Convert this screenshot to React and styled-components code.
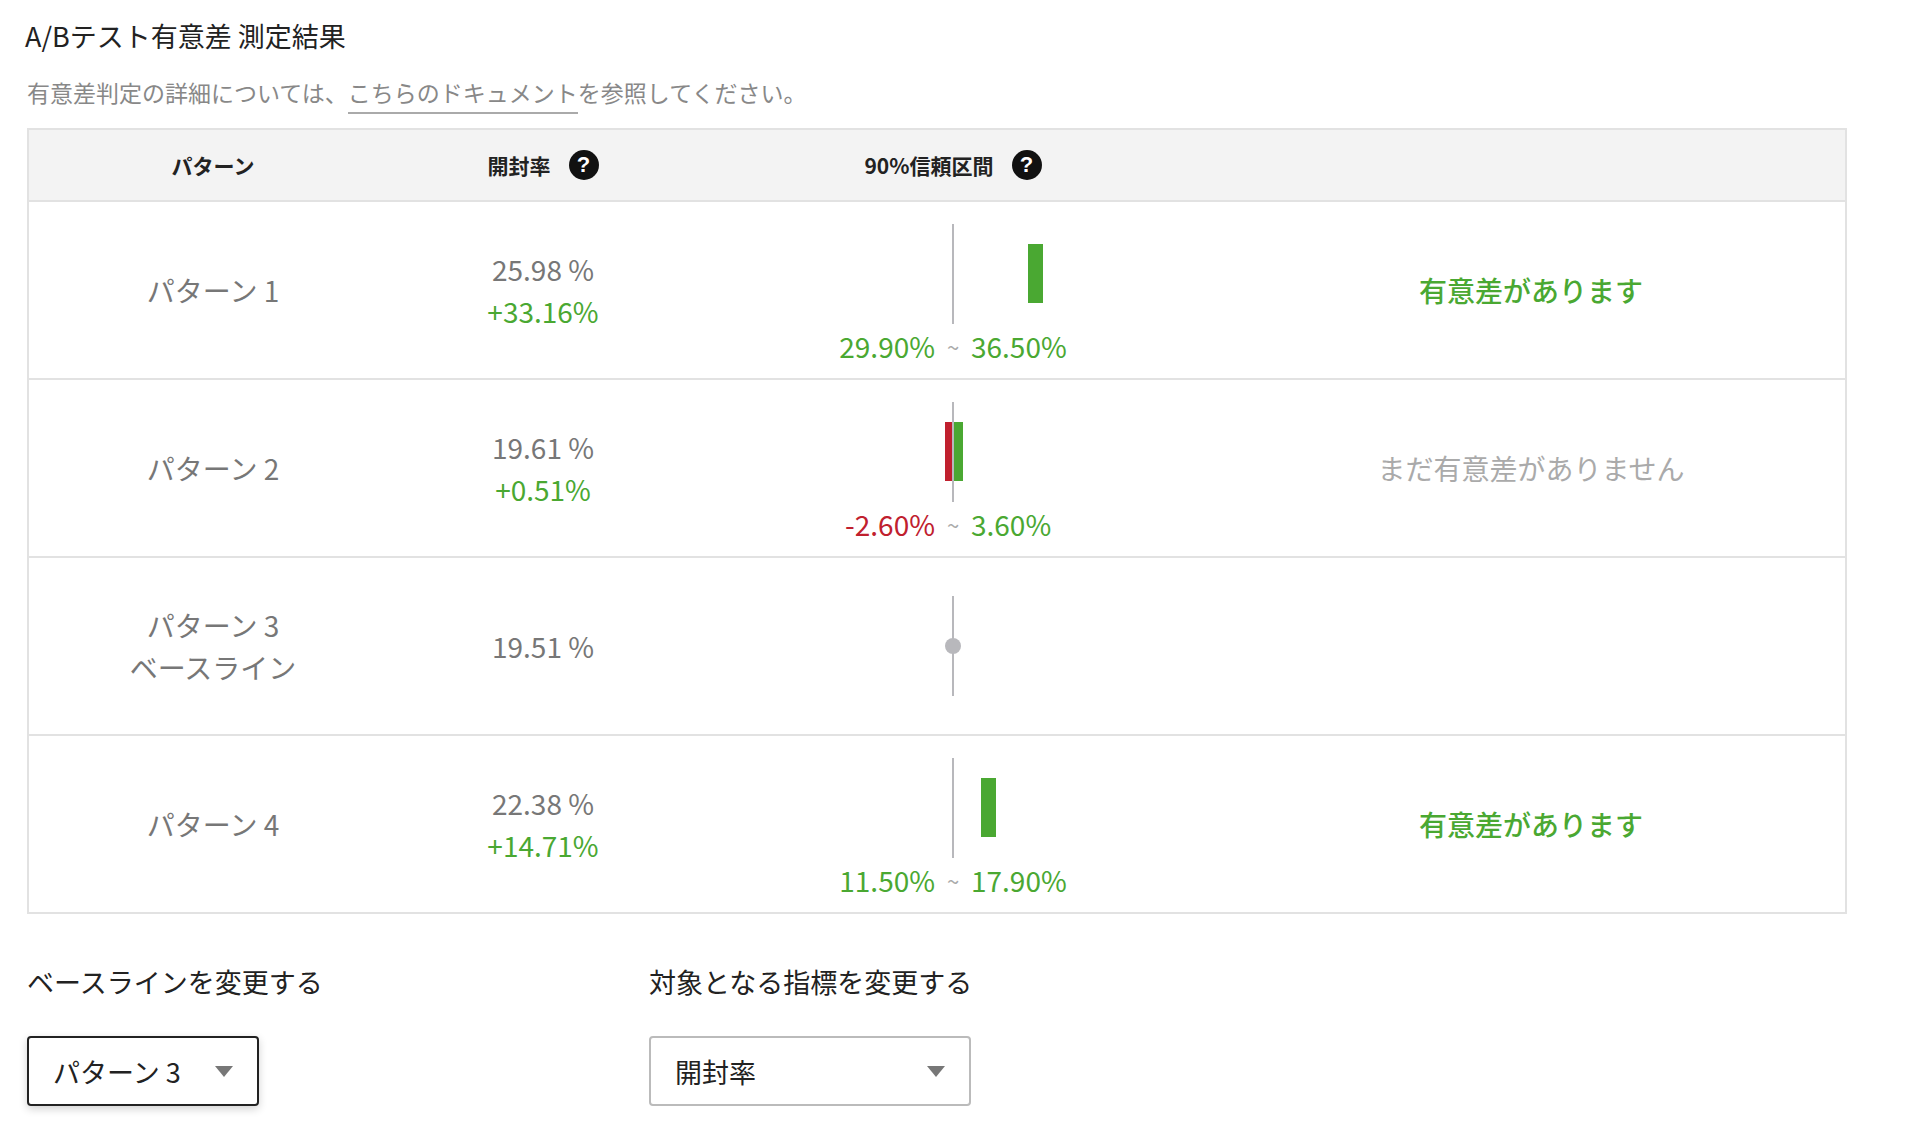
import React from 'react';
import styled, { createGlobalStyle } from 'styled-components';

const Global = createGlobalStyle`
  body {
    margin: 0;
    background: #fff;
    font-family: "Noto Sans CJK JP", "Noto Sans", sans-serif;
  }
`;

const GREEN = '#4aa832';
const RED = '#c0202e';
const PX = 2.54;

const Page = styled.div`
  width: 1820px;
  padding: 16px 0 0 27px;
`;

const Title = styled.h1`
  margin: 0 0 0 -2px;
  font-size: 27px;
  font-weight: 400;
  color: #222;
  line-height: 40px;
`;

const Sub = styled.p`
  margin: 20px 0 0 0;
  font-size: 23px;
  color: #888;
  line-height: 32px;
  a {
    color: #888;
    text-decoration: none;
    border-bottom: 2px solid #aaa;
    padding-bottom: 3px;
  }
`;

const Table = styled.div`
  margin-top: 20px;
  border: 2px solid #e2e2e2;
`;

const Grid = styled.div`
  display: grid;
  grid-template-columns: 368px 292px 528px 1fr;
  align-items: center;
  height: ${p => p.$h}px;
  background: ${p => (p.$head ? '#f3f3f3' : '#fff')};
  border-top: ${p => (p.$first ? 'none' : '2px solid #e2e2e2')};
`;

const HeadCell = styled.div`
  display: flex;
  justify-content: center;
  align-items: center;
  gap: 18px;
  font-size: 21px;
  font-weight: 700;
  color: #222;
`;

const Help = styled.span`
  width: 30px;
  height: 30px;
  border-radius: 50%;
  background: #111;
  color: #fff;
  font-size: 22px;
  font-weight: 700;
  display: inline-flex;
  align-items: center;
  justify-content: center;
  font-family: "Liberation Sans", sans-serif;
`;

const Cell = styled.div`
  text-align: center;
  font-size: 28px;
  line-height: 42px;
  color: ${p => p.$color || '#777'};
`;

const Chart = styled.div`
  display: flex;
  flex-direction: column;
  align-items: center;
  padding-top: 12px;
`;

const Plot = styled.div`
  position: relative;
  width: 2px;
  height: 100px;
  background: #b8b8bc;
`;

const Bar = styled.div`
  position: absolute;
  top: 20px;
  height: 59px;
  background: ${p => p.$c};
`;

const Dot = styled.div`
  position: absolute;
  top: 42px;
  left: -7px;
  width: 16px;
  height: 16px;
  border-radius: 50%;
  background: #b8b8bc;
`;

const Range = styled.div`
  display: grid;
  grid-template-columns: 200px 36px 200px;
  height: 44px;
  align-items: center;
  font-size: 28px;
  span:first-child { text-align: right; }
  span:nth-child(2) { text-align: center; color: #aaa; font-size: 22px; }
`;

const Controls = styled.div`
  display: grid;
  grid-template-columns: 622px 400px;
  margin-top: 50px;
`;

const Label = styled.div`
  font-size: 27px;
  color: #222;
  line-height: 36px;
`;

const Select = styled.div`
  margin-top: 36px;
  width: ${p => p.$w}px;
  height: 70px;
  box-sizing: border-box;
  border: 2px solid ${p => (p.$active ? '#222' : '#bbb')};
  border-radius: 4px;
  box-shadow: ${p => (p.$active ? '0 3px 8px rgba(0,0,0,0.18)' : 'none')};
  display: flex;
  align-items: center;
  justify-content: space-between;
  padding: 0 24px 0 24px;
  font-size: 27px;
  color: #222;
`;

const Caret = styled.span`
  width: 0;
  height: 0;
  border-left: 9px solid transparent;
  border-right: 9px solid transparent;
  border-top: 11px solid #777;
`;

const Rule = styled.div`
  margin-top: 38px;
  height: 2px;
  background: #e2e2e2;
`;

const rows = [
  { name: ['パターン 1'], rate: '25.98 %', lift: '+33.16%', lo: 29.9, hi: 36.5, status: '有意差があります', ok: true },
  { name: ['パターン 2'], rate: '19.61 %', lift: '+0.51%', lo: -2.6, hi: 3.6, status: 'まだ有意差がありません' },
  { name: ['パターン 3', 'ベースライン'], rate: '19.51 %', base: true },
  { name: ['パターン 4'], rate: '22.38 %', lift: '+14.71%', lo: 11.5, hi: 17.9, status: '有意差があります', ok: true },
];

const fmt = v => `${v.toFixed(2)}%`;

const Interval = ({ r }) => {
  if (r.base) {
    return (
      <Chart style={{ paddingTop: 0, paddingBottom: 0 }}>
        <Plot><Dot /></Plot>
      </Chart>
    );
  }
  const bars = [];
  if (r.lo < 0) {
    bars.push(<Bar key="n" $c={RED} style={{ left: r.lo * PX, width: -r.lo * PX }} />);
    bars.push(<Bar key="p" $c={GREEN} style={{ left: 2, width: r.hi * PX }} />);
  } else {
    bars.push(<Bar key="p" $c={GREEN} style={{ left: r.lo * PX, width: 15 }} />);
  }
  return (
    <Chart>
      <Plot>{bars}</Plot>
      <Range>
        <span style={{ color: r.lo < 0 ? RED : GREEN }}>{fmt(r.lo)}</span>
        <span>~</span>
        <span style={{ color: GREEN }}>{fmt(r.hi)}</span>
      </Range>
    </Chart>
  );
};

export default function App() {
  return (
    <Page>
      <Global />
      <Title>A/Bテスト有意差 測定結果</Title>
      <Sub>有意差判定の詳細については、<a href="#">こちらのドキュメント</a>を参照してください。</Sub>
      <Table>
        <Grid $head $first $h={70}>
          <HeadCell>パターン</HeadCell>
          <HeadCell>開封率<Help>?</Help></HeadCell>
          <HeadCell>90%信頼区間<Help>?</Help></HeadCell>
          <div />
        </Grid>
        {rows.map(r => (
          <Grid key={r.name[0]} $h={176}>
            <Cell>{r.name.map(n => <div key={n}>{n}</div>)}</Cell>
            <Cell>
              <div>{r.rate}</div>
              {r.lift && <div style={{ color: GREEN }}>{r.lift}</div>}
            </Cell>
            <Interval r={r} />
            <Cell $color={r.ok ? GREEN : '#aaa'} style={{ fontWeight: r.ok ? 500 : 400 }}>
              {r.status}
            </Cell>
          </Grid>
        ))}
      </Table>
      <Controls>
        <div>
          <Label>ベースラインを変更する</Label>
          <Select $active $w={232}>パターン 3<Caret /></Select>
        </div>
        <div>
          <Label>対象となる指標を変更する</Label>
          <Select $w={322}>開封率<Caret /></Select>
        </div>
      </Controls>
      <Rule />
    </Page>
  );
}
